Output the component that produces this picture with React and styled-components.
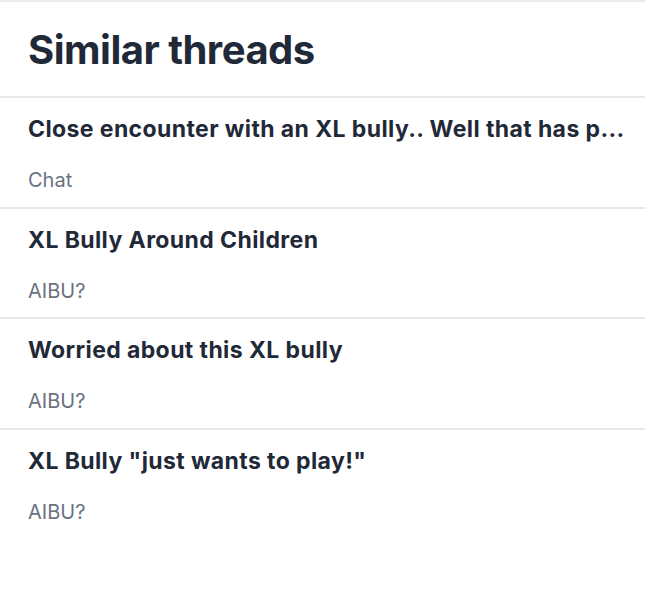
import React from "react";
import styled, { createGlobalStyle } from "styled-components";

const Global = createGlobalStyle`
  html, body {
    margin: 0;
    background: #ffffff;
  }
  body {
    font-family: Inter, "Noto Sans", sans-serif;
    -webkit-font-smoothing: antialiased;
  }
`;

const Panel = styled.section`
  width: 645px;
  border-top: 2px solid #e9eaee;
`;

const Header = styled.header`
  height: 94px;
  display: flex;
  align-items: center;
  padding: 0 28px;
  border-bottom: 2px solid #e5e7eb;
`;

const Heading = styled.h2`
  margin: 0;
  font-size: 40px;
  font-weight: 700;
  color: #1f2937;
  letter-spacing: -0.5px;
`;

const List = styled.ul`
  list-style: none;
  margin: 0;
  padding: 0;
`;

const Row = styled.li`
  height: 110.5px;
  box-sizing: border-box;
  padding: 17px 20px 0 28px;
  border-bottom: ${(p) => (p.$last ? "none" : "2px solid #e5e7eb")};
  display: flex;
  flex-direction: column;
  gap: 25px;
`;

const Title = styled.div`
  font-size: 23px;
  line-height: 28px;
  font-weight: 700;
  letter-spacing: 0.4px;
  color: #1f2937;
  white-space: nowrap;
  overflow: hidden;
`;

const Board = styled.div`
  font-size: 20px;
  line-height: 24px;
  color: #6b7280;
`;

const threads = [
  { title: "Close encounter with an XL bully.. Well that has p...", board: "Chat" },
  { title: "XL Bully Around Children", board: "AIBU?" },
  { title: "Worried about this XL bully", board: "AIBU?" },
  { title: 'XL Bully "just wants to play!"', board: "AIBU?" },
];

export default function App() {
  return (
    <>
      <Global />
      <Panel>
        <Header>
          <Heading>Similar threads</Heading>
        </Header>
        <List>
          {threads.map((t, i) => (
            <Row key={i} $last={i === threads.length - 1}>
              <Title>{t.title}</Title>
              <Board>{t.board}</Board>
            </Row>
          ))}
        </List>
      </Panel>
    </>
  );
}
